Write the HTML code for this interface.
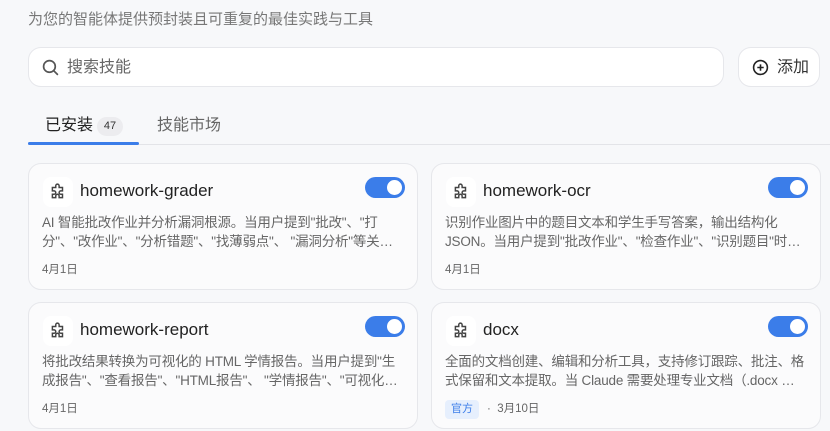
<!DOCTYPE html>
<html><head><meta charset="utf-8"><style>
*{box-sizing:border-box;margin:0;padding:0}
body{width:830px;height:431px;overflow:hidden;background:#f7f8fa;font-family:"Liberation Sans","Noto Sans CJK SC",sans-serif;position:relative;color:#222}
.sub{position:absolute;left:28px;top:8px;font-size:15px;color:#777}
.search{position:absolute;left:28px;top:47px;width:696px;height:40px;background:#fff;border:1px solid #e6e7eb;border-radius:13px}
.search span{position:absolute;left:38px;top:1px;line-height:38px;font-size:16px;color:#666}
.search svg{position:absolute;left:13px;top:11px}
.add{position:absolute;left:738px;top:47px;width:82px;height:40px;background:#fff;border:1px solid #e6e7eb;border-radius:13px;font-size:16px;color:#333}
.add svg{position:absolute;left:13px;top:11px}
.add span{position:absolute;left:38px;top:1px;line-height:38px}
.tab1{position:absolute;left:45px;top:115px;line-height:22px;font-size:16px;color:#222}
.badge{position:absolute;left:97px;top:117px;width:26px;height:19px;border-radius:10px;background:#ececef;font-size:11px;text-align:center;line-height:19px;color:#333}
.tab2{position:absolute;left:157px;top:115px;line-height:22px;font-size:16px;color:#666}
.line{position:absolute;left:28px;top:144px;width:802px;height:1px;background:#e3e4e8}
.ul{position:absolute;left:28px;top:142px;width:111px;height:3px;background:#3b7de9;border-radius:2px}
.card{position:absolute;width:390px;height:127px;background:#fbfbfc;border:1px solid #e6e7eb;border-radius:13px}
.ic{position:absolute;left:14px;top:13px;width:30px;height:30px;background:#fff;border-radius:8px}
.ic svg{position:absolute;left:6px;top:6px}
.t{position:absolute;left:51px;top:17px;font-size:17px;color:#222}
.tg{position:absolute;left:336px;top:13px;width:40px;height:21px;border-radius:11px;background:#3b7de9}
.tg::after{content:"";position:absolute;right:3px;top:3px;width:15px;height:15px;border-radius:50%;background:#fff}
.d{position:absolute;left:13px;top:49px;width:362px;font-size:13.5px;line-height:19px;color:#666;display:-webkit-box;-webkit-line-clamp:2;-webkit-box-orient:vertical;overflow:hidden;letter-spacing:-0.2px}
.dt{position:absolute;left:13px;top:97px;font-size:11.5px;color:#666}
.of{position:absolute;left:13px;top:97px;width:34px;height:19px;border-radius:4px;background:#e6effd;color:#3b7de9;font-size:11px;text-align:center;line-height:19px}
</style></head><body>
<div class="sub">为您的智能体提供预封装且可重复的最佳实践与工具</div>
<div class="search"><svg width="17" height="17" viewBox="0 0 16 16" fill="none" stroke="#555" stroke-width="1.6"><circle cx="7" cy="7" r="5.5"/><path d="M11 11l3.5 3.5" stroke-linecap="round"/></svg><span>搜索技能</span></div>
<div class="add"><svg width="17" height="17" viewBox="0 0 16 16" fill="none" stroke="#222" stroke-width="1.5"><circle cx="8" cy="8" r="6.5"/><path d="M8 5v6M5 8h6"/></svg><span>添加</span></div>
<div class="tab1">已安装</div><div class="badge">47</div><div class="tab2">技能市场</div>
<div class="line"></div><div class="ul"></div>

<div class="card" style="left:28px;top:163px">
<div class="ic"><svg width="18" height="18" viewBox="0 0 16 16" fill="none" stroke="#444" stroke-width="1.3"><path d="M6 2.5a1.5 1.5 0 013 0V4h3v3h-1.5a1.5 1.5 0 000 3H12v3H9v-1.5a1.5 1.5 0 00-3 0V13H3v-3h1.5a1.5 1.5 0 000-3H3V4h3z"/></svg></div>
<div class="t">homework-grader</div><div class="tg"></div>
<div class="d">AI 智能批改作业并分析漏洞根源。当用户提到"批改"、"打分"、"改作业"、"分析错题"、"找薄弱点"、 "漏洞分析"等关键词时使用</div>
<div class="dt">4月1日</div></div>

<div class="card" style="left:431px;top:163px">
<div class="ic"><svg width="18" height="18" viewBox="0 0 16 16" fill="none" stroke="#444" stroke-width="1.3"><path d="M6 2.5a1.5 1.5 0 013 0V4h3v3h-1.5a1.5 1.5 0 000 3H12v3H9v-1.5a1.5 1.5 0 00-3 0V13H3v-3h1.5a1.5 1.5 0 000-3H3V4h3z"/></svg></div>
<div class="t">homework-ocr</div><div class="tg"></div>
<div class="d">识别作业图片中的题目文本和学生手写答案，输出结构化 JSON。当用户提到"批改作业"、"检查作业"、"识别题目"时使用</div>
<div class="dt">4月1日</div></div>

<div class="card" style="left:28px;top:302px">
<div class="ic"><svg width="18" height="18" viewBox="0 0 16 16" fill="none" stroke="#444" stroke-width="1.3"><path d="M6 2.5a1.5 1.5 0 013 0V4h3v3h-1.5a1.5 1.5 0 000 3H12v3H9v-1.5a1.5 1.5 0 00-3 0V13H3v-3h1.5a1.5 1.5 0 000-3H3V4h3z"/></svg></div>
<div class="t">homework-report</div><div class="tg"></div>
<div class="d">将批改结果转换为可视化的 HTML 学情报告。当用户提到"生成报告"、"查看报告"、"HTML报告"、 "学情报告"、"可视化报告"时使用</div>
<div class="dt">4月1日</div></div>

<div class="card" style="left:431px;top:302px">
<div class="ic"><svg width="18" height="18" viewBox="0 0 16 16" fill="none" stroke="#444" stroke-width="1.3"><path d="M6 2.5a1.5 1.5 0 013 0V4h3v3h-1.5a1.5 1.5 0 000 3H12v3H9v-1.5a1.5 1.5 0 00-3 0V13H3v-3h1.5a1.5 1.5 0 000-3H3V4h3z"/></svg></div>
<div class="t">docx</div><div class="tg"></div>
<div class="d">全面的文档创建、编辑和分析工具，支持修订跟踪、批注、格式保留和文本提取。当 Claude 需要处理专业文档（.docx 文件）时使用</div>
<div class="of">官方</div><div class="dt" style="left:55px">·&nbsp; 3月10日</div></div>
</body></html>
